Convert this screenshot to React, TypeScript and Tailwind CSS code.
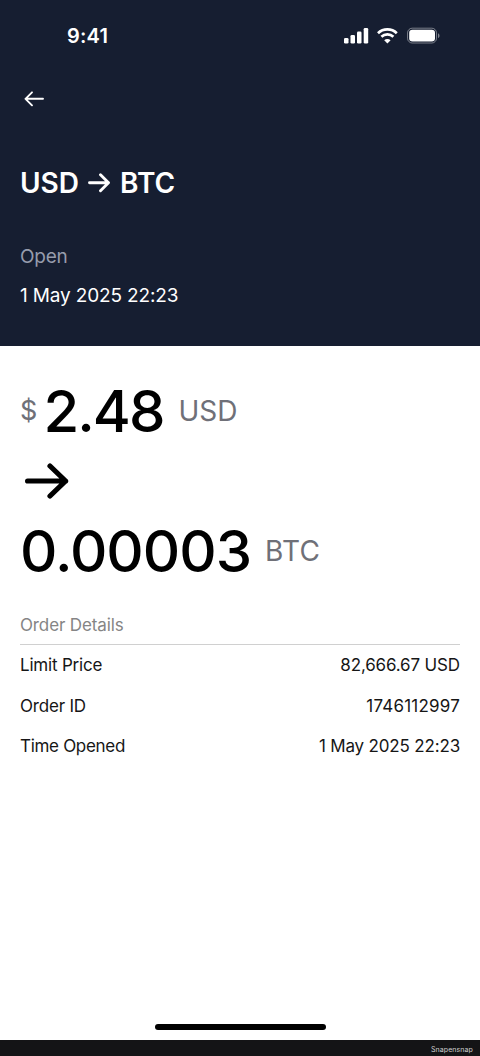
export default function App() {
  return (
    <div className="flex h-[1056px] w-[480px] flex-col overflow-hidden whitespace-nowrap bg-white font-['Inter',sans-serif] text-black">
      <header className="h-[346px] shrink-0 bg-[#161e31] px-5 text-white">
        <div className="flex h-[70px] items-center justify-between pl-[47px] pr-5 pt-[2px]">
          <span className="text-[20px] font-semibold leading-6 tracking-[0.2px]">9:41</span>
          <svg width="96" height="18" viewBox="0 0 96 18" fill="currentColor">
            <rect x="0" y="11" width="4.500" height="5.500" rx="1.300" />
            <rect x="6.500" y="8" width="4.500" height="8.500" rx="1.300" />
            <rect x="13" y="4.500" width="4.500" height="12" rx="1.300" />
            <rect x="19.700" y="1" width="4.500" height="15.500" rx="1.300" />
            <g fill="none" stroke="currentColor" strokeWidth="2.700">
              <path d="M34 6.200c5.200-5.100 13.600-5.100 18.800 0" />
              <path d="M37.400 9.800c3.400-3.200 8.600-3.200 12 0" />
            </g>
            <path d="M40.200 13.200c1.800-1.700 4.600-1.700 6.400 0L43.400 16.500z" />
            <rect x="63.500" y="1.200" width="29" height="14.800" rx="4.700" fill="none" stroke="currentColor" strokeOpacity=".42" />
            <rect x="65.200" y="2.700" width="25.800" height="11.800" rx="3.300" />
            <path d="M94 6.200v4.800c2-.8 2-4 0-4.800z" opacity=".45" />
          </svg>
        </div>
        <svg className="mt-[19px] ml-1" width="20" height="20" viewBox="0 0 20 20" fill="none" stroke="currentColor" strokeWidth="1.900" strokeLinecap="round" strokeLinejoin="round">
          <path d="M19 9.800H1.500M8 3.300 1.500 9.800 8 16.300" />
        </svg>
        <h1 className="mt-[58px] flex h-8 items-center text-[28px] font-[590] leading-8">
          <span>USD</span>
          <svg className="mx-[9px]" width="23" height="20" viewBox="0 0 23 20" fill="none" stroke="currentColor" strokeWidth="2.900" strokeLinecap="round" strokeLinejoin="round"><path d="M1.500 9.700h19M12.500 1.700l8 8-8 8" /></svg>
          <span>BTC</span>
        </h1>
        <p className="mt-[46px] text-[19px] leading-6 tracking-[-0.25px] text-[#969cac]">Open</p>
        <p className="mt-[15px] text-[19px] leading-6 tracking-[-0.15px]">1 May 2025 22:23</p>
      </header>
      <main className="flex-1 px-5 pt-[30px]">
        <div className="flex h-[70px] items-center">
          <span className="w-4 text-[27px] text-[#6f7078]">$</span>
          <span className="ml-[7.500px] text-[58px] font-medium leading-none tracking-[-2px]">2.48</span>
          <span className="ml-[15px] text-[28px] text-[#6f7078]">USD</span>
        </div>
        <div className="flex h-[70px] items-center pl-[5px]">
          <svg width="44" height="38" viewBox="0 0 44 38" fill="none" stroke="currentColor" strokeWidth="5.200" strokeLinecap="round" strokeLinejoin="round"><path d="M2.600 19h38M25 4l15.600 15L25 34" /></svg>
        </div>
        <div className="flex h-[70px] items-center">
          <span className="text-[58px] font-medium leading-none tracking-[-1px]">0.00003</span>
          <span className="ml-[14px] text-[28px] tracking-[0.2px] text-[#6f7078]">BTC</span>
        </div>
        <section className="mt-[27px] text-[17px] leading-6 text-[#161616]">
          <h2 className="h-8 border-b border-[#d0d0d0] tracking-[-0.13px] text-[#858585]">Order Details</h2>
          <dl>
            <div className="flex h-[40.400px] items-center justify-between"><dt className="tracking-[-0.2px]">Limit Price</dt><dd className="tracking-[-0.15px]">82,666.67 USD</dd></div>
            <div className="flex h-[40.400px] items-center justify-between"><dt className="tracking-[-0.2px]">Order ID</dt><dd className="tracking-[0.2px]">1746112997</dd></div>
            <div className="flex h-[40.400px] items-center justify-between"><dt className="tracking-[-0.3px]">Time Opened</dt><dd className="tracking-[-0.17px]">1 May 2025 22:23</dd></div>
          </dl>
        </section>
      </main>
      <div className="mb-[10px] h-[6px] w-[171px] self-center rounded-full bg-black" />
      <footer className="flex h-4 shrink-0 items-center justify-end bg-[#141416] pr-[7px] pt-[5px] text-[7px] tracking-[0.1px] text-[#d0d0d0]">Snapensnap</footer>
    </div>
  );
}
